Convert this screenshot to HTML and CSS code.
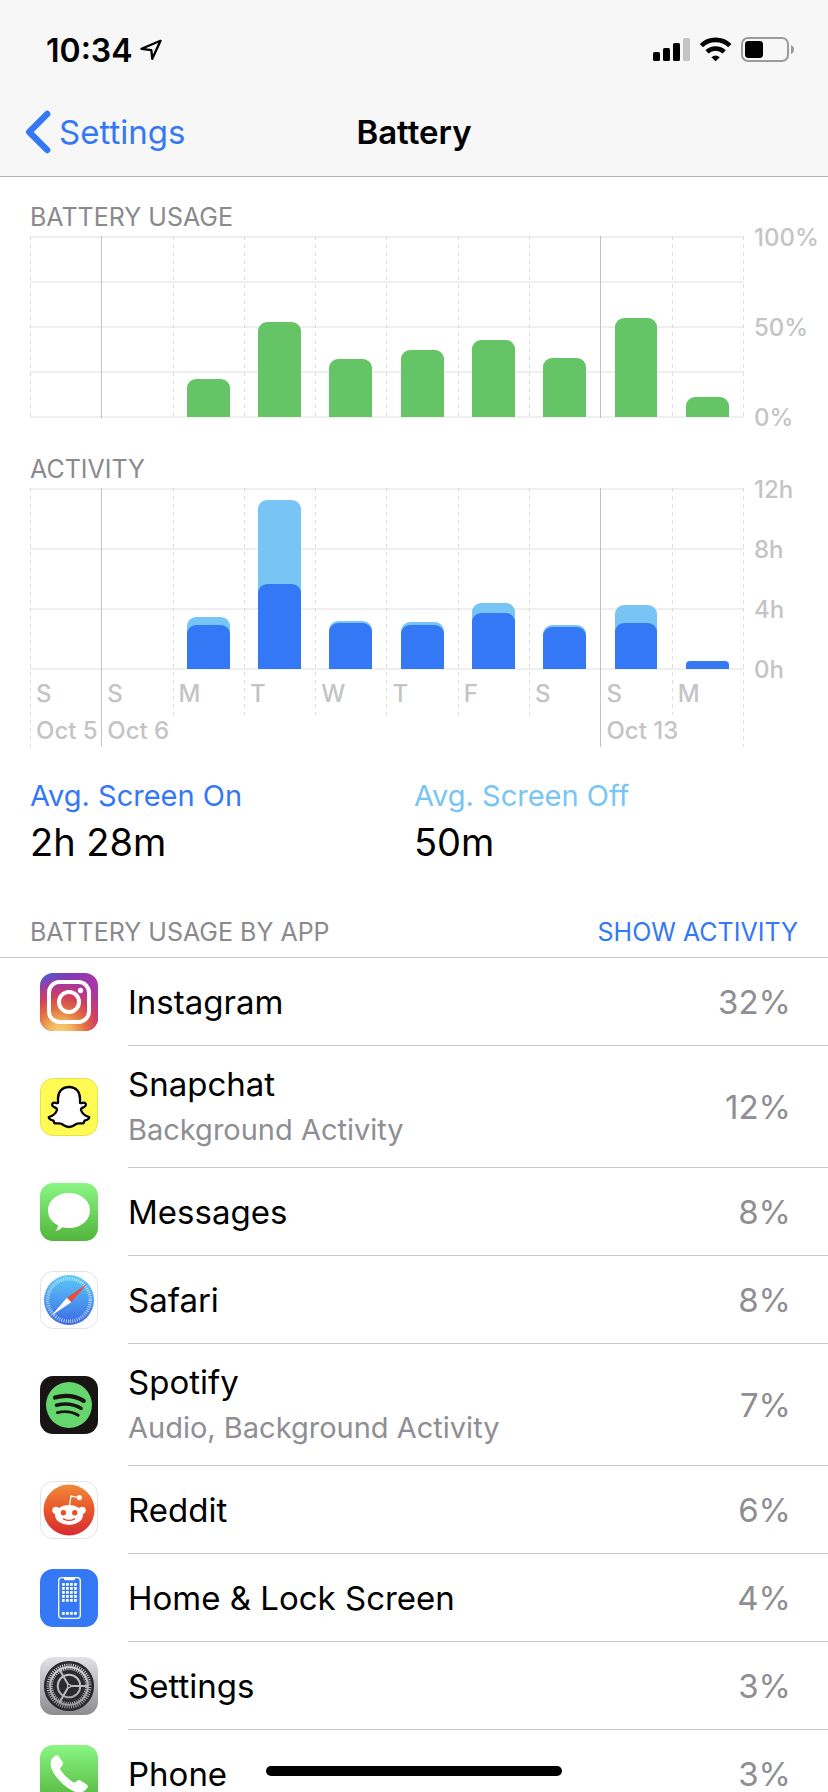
FILE: index.html
```html
<!DOCTYPE html>
<html lang="en">
<head>
<meta charset="utf-8">
<meta name="viewport" content="width=device-width, initial-scale=1">
<title>Battery</title>
<link rel="stylesheet" href="styles.css">
</head>
<body>
<div class="screen">
  <header class="header">
    <div class="status">
      <div class="clock">
        <span class="time">10:34</span>
        <svg class="location" width="24" height="24" viewBox="138 38 24 24" aria-hidden="true"><path d="M159.5 40.8 140.5 48.8 150.3 50.2 151.3 58.8Z" fill="none" stroke="#000" stroke-width="2.3" stroke-linejoin="round"/></svg>
      </div>
      <svg class="indicators" width="144" height="28" viewBox="652 36 144 28" role="img" aria-label="Signal, Wi-Fi and battery level">
        <rect x="653" y="52" width="7" height="9" rx="1.6"/>
        <rect x="663" y="48" width="7" height="13" rx="1.6"/>
        <rect x="673" y="43" width="7" height="18" rx="1.6"/>
        <rect x="683" y="38" width="7" height="23" rx="1.6" fill="#c4c4c4"/>
        <g fill="none" stroke="#000" stroke-width="4.6">
          <path d="M701.4 45.6a20.4 20.4 0 0 1 28.4 0"/>
          <path d="M707 51.9a12.5 12.5 0 0 1 17.2 0"/>
        </g>
        <path d="M711.4 57.3a6.5 6.5 0 0 1 8.4 0L715.6 61.3Z"/>
        <rect x="742" y="38" width="46" height="23" rx="6" fill="none" stroke="#9b9b9b" stroke-width="2"/>
        <rect x="745" y="41" width="18" height="17" rx="3.4"/>
        <path d="M791 45v9q3-1.4 3-4.5t-3-4.5Z" fill="#9b9b9b"/>
      </svg>
    </div>
    <nav class="nav">
      <a class="back" href="#settings">
        <svg width="26" height="44" viewBox="25 110 26 44" aria-hidden="true"><path d="M47.2 114 29.2 132 47.2 150" fill="none" stroke="#3478f6" stroke-width="6.4" stroke-linecap="round" stroke-linejoin="round"/></svg>
        <span>Settings</span>
      </a>
      <h1 class="title">Battery</h1>
    </nav>
  </header>

  <main class="content">
    <section class="chart">
      <h2 class="label">BATTERY USAGE</h2>
      <div class="plot">
        <div class="grid quarters">
          <div class="day"><div class="bars"></div></div>
          <div class="day week"><div class="bars"></div></div>
          <div class="day"><div class="bars"><i class="bar level" style="height:21%"></i></div></div>
          <div class="day"><div class="bars"><i class="bar level" style="height:53%"></i></div></div>
          <div class="day"><div class="bars"><i class="bar level" style="height:32%"></i></div></div>
          <div class="day"><div class="bars"><i class="bar level" style="height:37%"></i></div></div>
          <div class="day"><div class="bars"><i class="bar level" style="height:43%"></i></div></div>
          <div class="day"><div class="bars"><i class="bar level" style="height:33%"></i></div></div>
          <div class="day week"><div class="bars"><i class="bar level" style="height:55%"></i></div></div>
          <div class="day"><div class="bars"><i class="bar level" style="height:11%"></i></div></div>
          <div class="edge"></div>
        </div>
        <div class="axis"><span>100%</span><span>50%</span><span>0%</span></div>
      </div>
    </section>

    <section class="chart">
      <h2 class="label">ACTIVITY</h2>
      <div class="plot">
        <div class="grid thirds">
          <div class="day"><div class="bars"></div><span class="name">S</span><span class="date">Oct 5</span></div>
          <div class="day week"><div class="bars"></div><span class="name">S</span><span class="date">Oct 6</span></div>
          <div class="day"><div class="bars"><i class="bar off" style="height:29%"></i><i class="bar on" style="height:24.5%"></i></div><span class="name">M</span></div>
          <div class="day"><div class="bars"><i class="bar off" style="height:94%"></i><i class="bar on" style="height:47.2%"></i></div><span class="name">T</span></div>
          <div class="day"><div class="bars"><i class="bar off" style="height:26.7%"></i><i class="bar on" style="height:25.5%"></i></div><span class="name">W</span></div>
          <div class="day"><div class="bars"><i class="bar off" style="height:26.1%"></i><i class="bar on" style="height:24.5%"></i></div><span class="name">T</span></div>
          <div class="day"><div class="bars"><i class="bar off" style="height:36.6%"></i><i class="bar on" style="height:31%"></i></div><span class="name">F</span></div>
          <div class="day"><div class="bars"><i class="bar off" style="height:24.3%"></i><i class="bar on" style="height:23.4%"></i></div><span class="name">S</span></div>
          <div class="day week"><div class="bars"><i class="bar off" style="height:35.6%"></i><i class="bar on" style="height:25.6%"></i></div><span class="name">S</span><span class="date">Oct 13</span></div>
          <div class="day"><div class="bars"><i class="bar on low" style="height:4.4%"></i></div><span class="name">M</span></div>
          <div class="edge"></div>
        </div>
        <div class="axis"><span>12h</span><span>8h</span><span>4h</span><span>0h</span></div>
      </div>
    </section>

    <dl class="averages">
      <div><dt class="avg-on">Avg. Screen On</dt><dd>2h 28m</dd></div>
      <div><dt class="avg-off">Avg. Screen Off</dt><dd>50m</dd></div>
    </dl>

    <section>
      <div class="list-head">
        <h2 class="label">BATTERY USAGE BY APP</h2>
        <button class="toggle" type="button">SHOW ACTIVITY</button>
      </div>
      <ul class="apps">
        <li class="app">
          <svg class="icon" viewBox="0 0 58 58" aria-hidden="true">
            <defs>
              <linearGradient id="ig-a" x1="0" y1="0" x2="1" y2=".25"><stop offset="0" stop-color="#4463d2"/><stop offset=".45" stop-color="#7a3cb8"/><stop offset="1" stop-color="#b234a4"/></linearGradient>
              <radialGradient id="ig-b" cx=".35" cy="1.05" r="1.05"><stop offset="0" stop-color="#f8d77c"/><stop offset=".2" stop-color="#f2b560"/><stop offset=".42" stop-color="#e2703f"/><stop offset=".62" stop-color="#d0405c"/><stop offset=".82" stop-color="#b83690" stop-opacity=".75"/><stop offset="1" stop-color="#8a3ab9" stop-opacity="0"/></radialGradient>
            </defs>
            <rect width="58" height="58" rx="13" fill="url(#ig-a)"/><rect width="58" height="58" rx="13" fill="url(#ig-b)"/>
            <rect x="9" y="9" width="40" height="40" rx="10.5" fill="none" stroke="#fff" stroke-width="4"/>
            <circle cx="29" cy="29" r="10" fill="none" stroke="#fff" stroke-width="4"/><circle cx="40.5" cy="17.5" r="2.7" fill="#fff"/>
          </svg>
          <div class="row"><div class="names"><span class="app-name">Instagram</span></div><span class="share">32%</span></div>
        </li>
        <li class="app tall">
          <svg class="icon" viewBox="0 0 58 58" aria-hidden="true">
            <rect x=".5" y=".5" width="57" height="57" rx="12.5" fill="#fffb54" stroke="#e6e24c"/>
            <path d="M29 9C36 9 40 14 40 20.5V25C42 25.5 43 24.4 44.6 24.8 46.8 26 46 28 44 29 42 30 40.6 30.4 41 32 42 35 45 38 49.2 39 49.6 40.6 47.5 42 44.5 42.7 43.8 43.5 44.2 45 43 45.4 41 45.7 38.8 44.8 36.6 45.8 34 47.5 32.4 49 29 49 25.6 49 24 47.5 21.4 45.8 19.2 44.8 17 45.7 15 45.4 13.8 45 14.2 43.5 13.5 42.7 10.5 42 8.4 40.6 8.8 39 13 38 16 35 17 32 17.4 30.4 16 30 14 29 12 28 11.2 26 13.4 24.8 15 24.4 16 25.5 18 25V20.5C18 14 22 9 29 9Z" fill="#fff" stroke="#000" stroke-width="2.3" stroke-linejoin="round"/>
          </svg>
          <div class="row"><div class="names"><span class="app-name">Snapchat</span><span class="detail">Background Activity</span></div><span class="share">12%</span></div>
        </li>
        <li class="app">
          <svg class="icon" viewBox="0 0 58 58" aria-hidden="true">
            <defs><linearGradient id="green" x2="0" y2="1"><stop stop-color="#8af783"/><stop offset="1" stop-color="#52b43c"/></linearGradient></defs>
            <rect width="58" height="58" rx="13" fill="url(#green)"/>
            <path d="M29 10C40.6 10 50 17.7 50 27.4S40.6 45 29 45C26.7 45 24.6 44.7 22.6 44.2 20.6 46 18 47.8 15.3 47.9 17 46.5 18 44.5 17.9 42.3 11.8 39.1 8 33.7 8 27.4 8 17.7 17.4 10 29 10Z" fill="#fff"/>
          </svg>
          <div class="row"><div class="names"><span class="app-name">Messages</span></div><span class="share">8%</span></div>
        </li>
        <li class="app">
          <svg class="icon" viewBox="0 0 58 58" aria-hidden="true">
            <defs><linearGradient id="sky" x2="0" y2="1"><stop stop-color="#5ccbf7"/><stop offset="1" stop-color="#3a6ae6"/></linearGradient></defs>
            <rect x=".5" y=".5" width="57" height="57" rx="12.5" fill="#fff" stroke="#e4e4e4"/>
            <circle cx="29" cy="29" r="25" fill="url(#sky)"/>
            <circle cx="29" cy="29" r="21.3" fill="none" stroke="#fff" stroke-opacity=".75" stroke-width="3.4" stroke-dasharray=".8 1.43"/>
            <path d="M47.5 12.5 26.9 26.8 31.2 31.3Z" fill="#eb4d3d"/><path d="M11.3 44.8 26.9 26.8 31.2 31.3Z" fill="#fff"/>
          </svg>
          <div class="row"><div class="names"><span class="app-name">Safari</span></div><span class="share">8%</span></div>
        </li>
        <li class="app tall">
          <svg class="icon" viewBox="0 0 58 58" aria-hidden="true">
            <rect width="58" height="58" rx="13" fill="#191414"/><circle cx="29" cy="29" r="23" fill="#65d56e"/>
            <g fill="none" stroke="#191414" stroke-linecap="round"><path d="M15 21.6C24.5 18.9 35.5 20 43.7 24.9" stroke-width="4.2"/><path d="M16.5 29.3C25 27 33.8 28.1 41 32.3" stroke-width="3.5"/><path d="M17.4 36.6C24.8 34.9 32 35.7 38.2 39.3" stroke-width="2.8"/></g>
          </svg>
          <div class="row"><div class="names"><span class="app-name">Spotify</span><span class="detail">Audio, Background Activity</span></div><span class="share">7%</span></div>
        </li>
        <li class="app">
          <svg class="icon" viewBox="0 0 58 58" aria-hidden="true">
            <defs><linearGradient id="ember" x2="0" y2="1"><stop stop-color="#ef8a38"/><stop offset=".5" stop-color="#e9552b"/><stop offset="1" stop-color="#d72b30"/></linearGradient></defs>
            <rect x=".5" y=".5" width="57" height="57" rx="12.5" fill="#fff" stroke="#e4e4e4"/>
            <circle cx="29" cy="29" r="25.5" fill="url(#ember)"/>
            <g fill="#fff"><ellipse cx="29" cy="34" rx="14" ry="9.9"/><circle cx="15.9" cy="29.3" r="3.6"/><circle cx="42.1" cy="29.3" r="3.6"/><circle cx="39.4" cy="16.6" r="2.6"/></g>
            <path d="M29.4 25 31 15 38.5 16.6" fill="none" stroke="#fff" stroke-width="1.3"/>
            <g fill="#e9502b"><circle cx="23.4" cy="31.7" r="2.7"/><circle cx="34.8" cy="31.7" r="2.7"/></g>
            <path d="M23.5 37.8Q29 41 34.5 37.8" fill="none" stroke="#e5482c" stroke-width="1.4" stroke-linecap="round"/>
          </svg>
          <div class="row"><div class="names"><span class="app-name">Reddit</span></div><span class="share">6%</span></div>
        </li>
        <li class="app">
          <svg class="icon" viewBox="0 0 58 58" aria-hidden="true">
            <defs><pattern id="dots" x="22" y="14" width="4" height="4" patternUnits="userSpaceOnUse"><rect width="2.8" height="2.8" rx=".5" fill="#fff"/></pattern></defs>
            <rect width="58" height="58" rx="13" fill="#3478f6"/>
            <rect x="18.7" y="8.7" width="21.6" height="40.6" rx="3" fill="none" stroke="#fff" stroke-width="1.3"/>
            <path d="M23.5 8.5H35.5Q35 11.3 33.5 11.3H25.5Q24 11.3 23.5 8.5Z" fill="#fff"/>
            <rect x="22" y="14" width="15" height="19" fill="url(#dots)"/>
            <path d="M22 43h2.8v2.8H22zM26 43h2.8v2.8H26zM30 43h2.8v2.8H30zM34 43h2.8v2.8H34z" fill="#fff"/>
          </svg>
          <div class="row"><div class="names"><span class="app-name">Home &amp; Lock Screen</span></div><span class="share">4%</span></div>
        </li>
        <li class="app">
          <svg class="icon" viewBox="0 0 58 58" aria-hidden="true">
            <defs><linearGradient id="steel" x2="0" y2="1"><stop stop-color="#e3e2e7"/><stop offset="1" stop-color="#8c8b90"/></linearGradient></defs>
            <rect width="58" height="58" rx="13" fill="url(#steel)"/>
            <g fill="none" stroke="#2b2b2d">
              <circle cx="29" cy="29" r="23.8" stroke-width="2.6"/>
              <circle cx="29" cy="29" r="21.5" stroke-width="3.4" stroke-dasharray="1.2 1.05"/>
              <circle cx="29" cy="29" r="14.2" stroke-width="3.8"/>
              <circle cx="29" cy="29" r="16.9" stroke-width="2" stroke-dasharray="1.1 1.023"/>
            </g>
            <circle cx="29" cy="29" r="10.3" fill="#2b2b2d"/>
            <g stroke="#bcbbc0" stroke-width="2"><path d="M29 29H47.5M29 29 19.7 12.9M29 29 19.7 45.1"/></g>
            <circle cx="29" cy="29" r="2.2" fill="#bcbbc0"/><circle cx="29" cy="29" r="1" fill="#2b2b2d"/>
          </svg>
          <div class="row"><div class="names"><span class="app-name">Settings</span></div><span class="share">3%</span></div>
        </li>
        <li class="app">
          <svg class="icon" viewBox="0 0 58 58" aria-hidden="true">
            <rect width="58" height="58" rx="13" fill="url(#green)"/>
            <path d="M13 12.5 15.5 10.6Q17.5 9.6 18.8 11.5L22.6 17.3Q23.5 19 22.3 20.4L20.4 22.7Q19.8 23.6 20.4 24.7 24.5 31.5 33.2 37.2 34.3 37.9 35.2 37.1L37.6 35.4Q38.9 34.4 40.5 35.4L46.8 39.5Q48.5 40.9 47.5 42.5 44.5 47.5 39.5 47.8C29 47.5 10.5 30 10.6 18.5Q10.7 14.6 13 12.5Z" fill="#fff"/>
          </svg>
          <div class="row"><div class="names"><span class="app-name">Phone</span></div><span class="share">3%</span></div>
        </li>
      </ul>
    </section>
  </main>
  <div class="home-indicator"></div>
</div>
</body>
</html>
```

FILE: styles.css
```css
* { box-sizing: border-box; }

body {
  margin: 0;
  background: #fff;
  color: #000;
  font-family: Inter, "Liberation Sans", sans-serif;
  font-size: 33px;
}

h1, h2, ul, dl, dd { margin: 0; padding: 0; }

.screen {
  display: flex;
  flex-direction: column;
  height: 100vh;
}

/* Header */
.header {
  flex: none;
  background: #f7f7f7;
  border-bottom: 1px solid #b2b2b2;
}

.status {
  display: flex;
  align-items: center;
  justify-content: space-between;
  height: 88px;
  padding: 12px 32px 0 46px;
}

.clock {
  display: flex;
  align-items: center;
  gap: 6px;
  font-size: 32px;
  font-weight: 600;
}

.nav {
  display: grid;
  grid-template-columns: 1fr auto 1fr;
  align-items: center;
  height: 88px;
  padding: 0 25px;
}

.back {
  display: flex;
  align-items: center;
  gap: 8px;
  color: #3478f6;
  text-decoration: none;
}

.title { font-size: 33px; font-weight: 600; }

/* Charts */
.content {
  flex: 1;
  min-height: 0;
  overflow-y: auto;
  scrollbar-width: none;
  padding-top: 22px;
}

.chart { padding-left: 30px; }
.chart + .chart { padding-top: 33px; }
.chart .label { padding-bottom: 1px; }

.label {
  color: #8a8a8d;
  font-size: 25px;
  font-weight: 400;
  line-height: 36px;
}

.plot { display: flex; align-items: flex-start; }

.grid {
  flex: 1;
  display: flex;
  align-items: flex-start;
  background-size: 100% 182px;
  background-repeat: no-repeat;
}

.quarters { background-image: repeating-linear-gradient(#efefef 0 2px, transparent 2px 45px); }
.thirds { background-image: repeating-linear-gradient(#efefef 0 2px, transparent 2px 60px); }

.day, .edge {
  background: repeating-linear-gradient(#dedede 0 4px, transparent 4px 8px) 0 0 / 1px 100% no-repeat;
}

.day {
  flex: 1 1 0;
  min-width: 0;
  display: flex;
  flex-direction: column;
}

.week { background: linear-gradient(#c2c2c2, #c2c2c2) 0 0 / 1px 100% no-repeat; }

.edge { align-self: stretch; width: 1px; }

.bars {
  display: grid;
  align-items: end;
  justify-items: center;
  grid-template-rows: 180px;
  height: 182px;
  padding: 1px 0;
}

.bar {
  grid-area: 1 / 1;
  width: 60%;
  border-radius: 9px 9px 0 0;
}

.level { background: #65c466; }
.off { background: #78c5f5; }
.on { background: #3478f6; }
.low { border-radius: 4px 4px 0 0; }

.name, .date, .axis {
  color: #c4c4c6;
  font-size: 24px;
  font-weight: 500;
  white-space: nowrap;
}

.name { height: 45px; padding-left: 6px; line-height: 48px; }
.date { height: 32px; padding-left: 6px; line-height: 32px; }

.axis {
  display: flex;
  flex-direction: column;
  justify-content: space-between;
  width: 84px;
  height: 208px;
  margin: -12px 0 -14px;
  padding-left: 10px;
  line-height: 28px;
}

/* Averages */
.averages {
  display: grid;
  grid-template-columns: 1fr 1fr;
  padding-top: 29px;
}

.averages > div:first-child { padding-left: 30px; }
.averages dt { font-size: 29px; line-height: 40px; }
.averages dd { font-size: 38px; line-height: 52px; }
.avg-on { color: #3478f6; }
.avg-off { color: #78c5f5; }

/* App list */
.list-head {
  display: flex;
  align-items: center;
  justify-content: space-between;
  padding: 46px 30px 7px;
  border-bottom: 1px solid #c8c7cc;
}

.toggle {
  padding: 0;
  border: 0;
  background: none;
  color: #3478f6;
  font: inherit;
  font-size: 25px;
  line-height: 36px;
}

.apps { list-style: none; }

.app {
  display: flex;
  align-items: center;
  height: 88px;
  padding-left: 40px;
}

.tall { height: 122px; }

.icon { flex: none; width: 58px; height: 58px; }

.row {
  flex: 1;
  align-self: stretch;
  display: flex;
  align-items: center;
  justify-content: space-between;
  margin-left: 30px;
  padding-right: 37px;
  border-bottom: 1px solid #c8c7cc;
  line-height: 36px;
}

.names { display: flex; flex-direction: column; gap: 10px; }
.detail { color: #8e8e93; font-size: 29px; }
.share { color: #8e8e93; }

.home-indicator {
  position: fixed;
  left: 50%;
  bottom: 16px;
  width: 296px;
  height: 10px;
  margin-left: -148px;
  border-radius: 5px;
  background: #000;
}
```
